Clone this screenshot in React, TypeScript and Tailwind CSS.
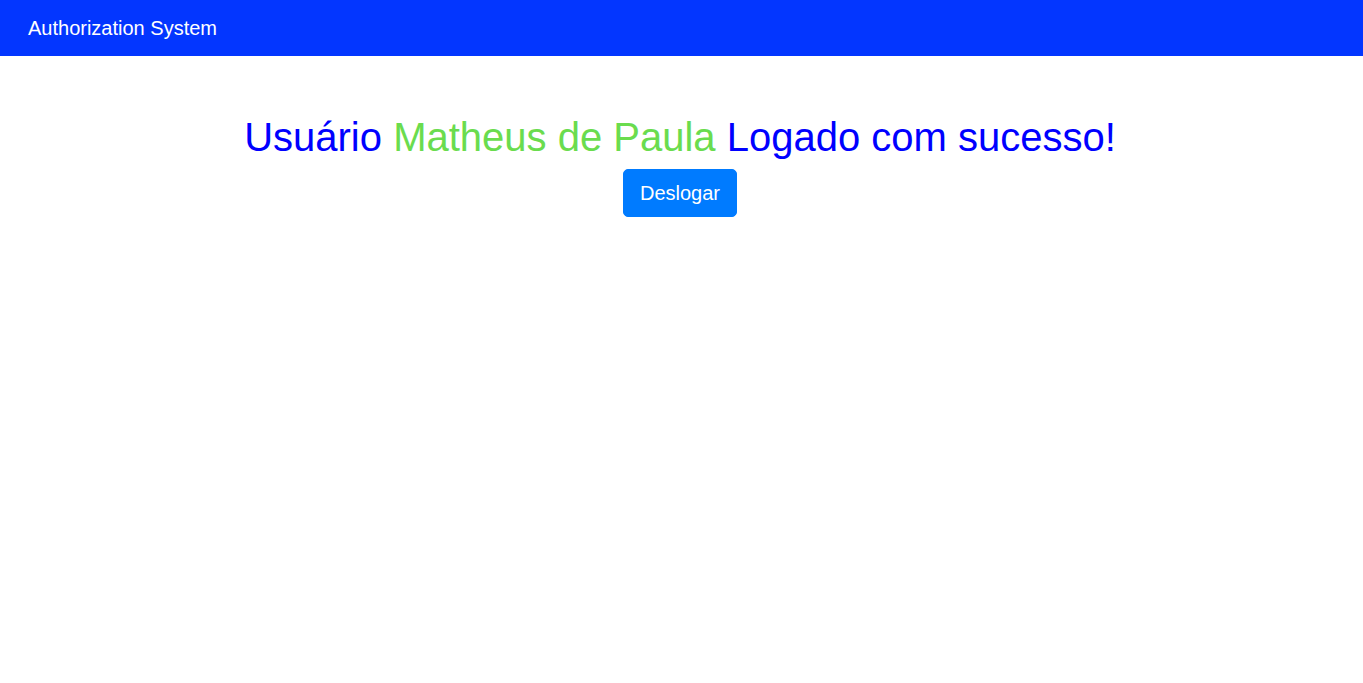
export default function App() {
  return (
    <div className="min-h-screen bg-white" style={{ fontFamily: '"Liberation Sans", Arial, sans-serif' }}>
      <nav className="h-14 bg-[#0336ff] flex items-center px-7">
        <span className="text-white text-xl">Authorization System</span>
      </nav>
      <main className="flex flex-col items-center pt-[57px] pr-[3px]">
        <h1 className="text-[40px] leading-[1.2] mb-2 text-[#0000ff]">
          Usuário <span className="text-[#6adc4e]">Matheus de Paula</span> Logado com sucesso!
        </h1>
        <button className="bg-[#007bff] text-white text-xl leading-[1.5] px-4 py-2 rounded-[5px] border border-[#007bff]">
          Deslogar
        </button>
      </main>
    </div>
  );
}
